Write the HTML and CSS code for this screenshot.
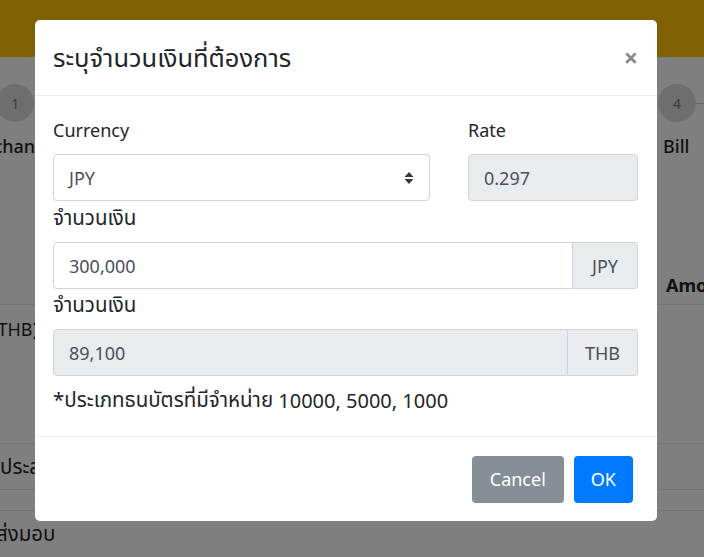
FILE: index.html
```html
<!DOCTYPE html>
<html lang="th">
<head>
<meta charset="utf-8">
<title>Exchange</title>
<link rel="stylesheet" href="styles.css">
</head>
<body>
<div class="page">
  <header class="topbar"></header>
  <div class="steps">
    <div class="step step-first">
      <span class="circle">1</span>
      <span class="step-label">Exchange</span>
    </div>
    <div class="step step-last">
      <span class="circle">4</span>
      <span class="step-label">Bill</span>
    </div>
  </div>
  <div class="table-head"><span class="amo">Amount</span></div>
  <div class="row-thb">(THB)</div>
  <div class="row-line row-a"><span class="th">ประสงค์</span></div>
  <div class="row-line row-b"></div>
  <div class="row-line row-c"><span class="th">ส่งมอบ</span></div>
</div>

<div class="backdrop"></div>

<div class="modal">
  <div class="modal-header">
    <h5 class="modal-title">ระบุจำนวนเงินที่ต้องการ</h5>
    <span class="close">×</span>
  </div>
  <div class="modal-body">
    <div class="top-row">
      <div class="field">
        <label class="label">Currency</label>
        <div class="select">
          <span>JPY</span>
          <svg class="caret" width="10" height="14" viewBox="0 0 10 14"><path d="M5 1 L9.5 6 H0.5 Z M5 13 L9.5 8 H0.5 Z" fill="#343a40"/></svg>
        </div>
      </div>
      <div class="field">
        <label class="label">Rate</label>
        <div class="input disabled">0.297</div>
      </div>
    </div>
    <label class="label th">จำนวนเงิน</label>
    <div class="input-group">
      <div class="input">300,000</div>
      <div class="addon">JPY</div>
    </div>
    <label class="label th">จำนวนเงิน</label>
    <div class="input-group">
      <div class="input disabled">89,100</div>
      <div class="addon">THB</div>
    </div>
    <p class="note"><span class="th">*ประเภทธนบัตรที่มีจำหน่าย</span> 10000, 5000, 1000</p>
  </div>
  <div class="modal-footer">
    <button class="btn btn-secondary">Cancel</button>
    <button class="btn btn-primary">OK</button>
  </div>
</div>
</body>
</html>
```

FILE: styles.css
```css
* { box-sizing: border-box; }
html, body { margin: 0; padding: 0; }
body {
  width: 704px;
  height: 557px;
  overflow: hidden;
  font-family: "Noto Sans", "Noto Sans Thai", "Loma", "Garuda", "Liberation Sans", sans-serif;
  font-size: 18px;
  color: #212529;
  background: #fff;
  position: relative;
}
.th { font-size: 20.5px; }
.page { width: 704px; }
.topbar { height: 57px; background: #ffc107; }
.steps {
  display: flex;
  justify-content: space-between;
  height: 140px;
  padding-top: 27px;
  position: relative;
}
.steps::after {
  content: "";
  position: absolute;
  left: 696px; right: 0; top: 46px;
  border-top: 1px solid #ccc;
}
.step { display: flex; flex-direction: column; align-items: center; }
.step-first { margin-left: -26px; }
.step-last { margin-right: 8px; align-items: flex-start; }
.circle {
  width: 38px; height: 38px; border-radius: 50%;
  background: #ddd; color: #777;
  display: flex; align-items: center; justify-content: center;
  font-size: 14px;
}
.step-last .circle { margin-left: -5px; }
.step-label { margin-top: 12px; font-size: 18px; font-weight: 500; }
.table-head {
  height: 108px;
  border-bottom: 1px solid #dee2e6;
  display: flex; justify-content: flex-end; align-items: flex-end;
  padding-bottom: 7px;
}
.amo { font-weight: 700; margin-right: -40px; width: 78px; }
.row-thb { height: 138px; padding-top: 12px; margin-left: -8px; }
.row-line { border-top: 1px solid #dee2e6; }
.row-a { height: 46px; padding-top: 8px; margin-left: 0; }
.row-b { height: 21px; }
.row-c { padding-top: 8px; margin-left: -4px; }

.backdrop {
  position: absolute; inset: 0;
  background: rgba(0,0,0,0.5);
}

.modal {
  position: absolute;
  left: 35px; top: 20px;
  width: 622px;
  height: 501px;
  background: #fff;
  border-radius: 5px;
  display: flex; flex-direction: column;
}
.modal-header {
  display: flex; justify-content: space-between; align-items: center;
  height: 76px;
  padding: 0 18px;
  border-bottom: 1px solid #e9ecef;
}
.modal-title { margin: 0; font-size: 25.5px; font-weight: 400; line-height: 1.2; }
.close { font-size: 25px; font-weight: 700; color: #888; line-height: 1; margin-right: 1px; }
.modal-body { padding: 21px 19px 0 18px; flex: 1; }
.top-row { display: grid; grid-template-columns: 377px 170px; column-gap: 38px; margin-bottom: 4px; }
.label {
  display: flex; align-items: center;
  height: 26px;
  margin-bottom: 11px;
}
.select, .input {
  height: 47px;
  border: 1px solid #ced4da;
  border-radius: 4px;
  padding: 0 15px;
  display: flex; align-items: center;
  color: #495057;
  background: #fff;
}
.select { justify-content: space-between; }
.input.disabled { background: #e9ecef; }
.input-group { display: flex; margin-bottom: 3px; }
.input-group .input { flex: 1; border-radius: 4px 0 0 4px; }
.addon {
  height: 47px;
  min-width: 65px;
  border: 1px solid #ced4da; border-left: 0;
  border-radius: 0 4px 4px 0;
  background: #e9ecef;
  color: #495057;
  padding: 0 17px;
  display: flex; align-items: center; justify-content: center;
}
.note {
  margin: 11px 0 0;
  height: 26px;
  display: flex; align-items: center;
  font-size: 20px;
  white-space: pre;
}
.note .th { font-size: 20.5px; }
.modal-footer {
  height: 85px;
  border-top: 1px solid #e9ecef;
  display: flex; justify-content: flex-end; align-items: center;
  padding: 0 24px 0 0;
  gap: 10px;
}
.btn {
  height: 47px;
  border: 0; border-radius: 4px;
  font: inherit; color: #fff;
}
.btn-secondary { background: #868e96; padding: 0 18px; }
.btn-primary { background: #007bff; padding: 0 17px; }
```
